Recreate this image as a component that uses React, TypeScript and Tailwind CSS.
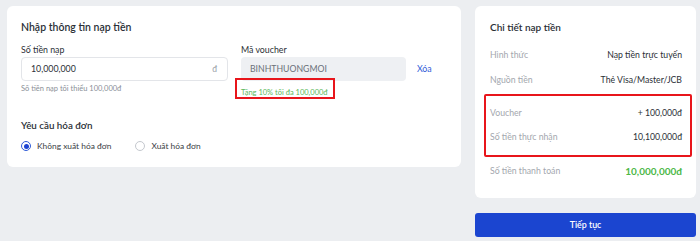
import React from 'react'

const font = { fontFamily: 'Lato, "Noto Sans", sans-serif' }

function Row({ label, value, valueClass = 'text-[#2b2f36]' }: { label: string; value: string; valueClass?: string }) {
  return (
    <div className="flex items-center justify-between h-[24px]">
      <span className="text-[8.7px] text-[#a3a7ae]">{label}</span>
      <span className={`text-[8.7px] ${valueClass}`}>{value}</span>
    </div>
  )
}

export default function App() {
  return (
    <div className="w-[700px] h-[241px] bg-[#eceef1] pt-[6px] pl-[7px] flex gap-[14px]" style={font}>
      <div className="w-[454px] h-[161px] bg-white rounded-[6px] px-[14px] pt-[12px]">
        <h2 className="text-[10.5px] font-semibold text-[#2b2f36] leading-[18px]">Nhập thông tin nạp tiền</h2>
        <div className="flex gap-[13px] mt-[7px]">
          <div className="w-[207px]">
            <div className="text-[8.8px] text-[#2b2f36] leading-[14px]">Số tiền nạp</div>
            <div className="h-[24px] border border-[#e3e5e9] rounded-[4px] flex items-center justify-between pl-[9px] pr-[10px]">
              <span className="text-[8.8px] text-[#2b2f36]">10,000,000</span>
              <span className="text-[8.5px] text-[#9aa0a8]">đ</span>
            </div>
            <div className="text-[7.5px] text-[#8a8f97] mt-[2px] leading-[12px]">Số tiền nạp tối thiểu 100,000đ</div>
          </div>
          <div>
            <div className="text-[8.8px] text-[#2b2f36] leading-[14px]">Mã voucher</div>
            <div className="flex items-center">
              <div className="w-[165px] h-[24px] bg-[#eef0f3] rounded-[4px] flex items-center pl-[9px]">
                <span className="text-[8.7px] text-[#6b7079]">BINHTHUONGMOI</span>
              </div>
              <span className="ml-[11px] text-[8.8px] text-[#2f5bd8]">Xóa</span>
            </div>
            <div className="relative mt-[2px] leading-[12px]">
              <span className="text-[7.5px] text-[#5cb85c]">Tặng 10% tối đa 100,000đ</span>
              <div className="absolute left-[-6px] top-[-5px] w-[100px] h-[21px] border-2 border-[#e8151b]" />
            </div>
          </div>
        </div>
        <h3 className="mt-[18px] text-[9.8px] font-semibold text-[#2b2f36] leading-[16px]">Yêu cầu hóa đơn</h3>
        <div className="flex items-center mt-[7px] gap-[24px]">
          <label className="flex items-center gap-[6px]">
            <span className="w-[10px] h-[10px] rounded-full border border-[#2f5bd8] flex items-center justify-center">
              <span className="w-[5px] h-[5px] rounded-full bg-[#1d44d1]" />
            </span>
            <span className="text-[8.4px] text-[#3a3e45]">Không xuất hóa đơn</span>
          </label>
          <label className="flex items-center gap-[6px]">
            <span className="w-[10px] h-[10px] rounded-full border border-[#c4c8ce]" />
            <span className="text-[8.4px] text-[#3a3e45]">Xuất hóa đơn</span>
          </label>
        </div>
      </div>

      <div className="w-[221px] flex flex-col">
        <div className="h-[192px] bg-white rounded-[6px] pl-[15px] pr-[14px] pt-[12px]">
          <h2 className="text-[10px] font-semibold text-[#2b2f36] leading-[18px]">Chi tiết nạp tiền</h2>
          <div className="mt-[7px]">
            <Row label="Hình thức" value="Nạp tiền trực tuyến" />
            <div className="mt-[1px]">
              <Row label="Nguồn tiền" value="Thẻ Visa/Master/JCB" />
            </div>
            <div className="relative mt-[9px]">
              <Row label="Voucher" value="+ 100,000đ" />
              <Row label="Số tiền thực nhận" value="10,100,000đ" />
              <div className="absolute left-[-6px] right-[-10px] top-[-7px] h-[63px] border-2 border-[#e8151b] rounded-[2px]" />
            </div>
            <div className="mt-[10px] flex items-center justify-between h-[24px]">
              <span className="text-[8.7px] text-[#a3a7ae]">Số tiền thanh toán</span>
              <span className="text-[10px] font-bold text-[#4cb847]">10,000,000đ</span>
            </div>
          </div>
        </div>
        <button className="mt-[15px] h-[24px] bg-[#1b45d0] rounded-[3px] text-white text-[8.8px] font-semibold">Tiếp tục</button>
      </div>
    </div>
  )
}
